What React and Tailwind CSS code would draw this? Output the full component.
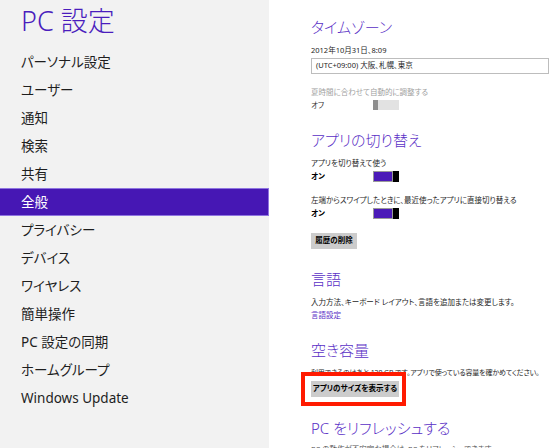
import React from "react";

const items = [
  "パーソナル設定",
  "ユーザー",
  "通知",
  "検索",
  "共有",
  "全般",
  "プライバシー",
  "デバイス",
  "ワイヤレス",
  "簡単操作",
  "PC 設定の同期",
  "ホームグループ",
  "Windows Update",
];

const font = "font-['Noto_Sans','Noto_Sans_CJK_JP',sans-serif] [font-feature-settings:'palt']";

function Heading({ children, mt }) {
  return (
    <div className={`${mt} h-[20px] shrink-0 text-[15px] font-light leading-[20px] text-[#5a2fc6] whitespace-nowrap`}>
      {children}
    </div>
  );
}

function Small({ children, mt, className = "" }) {
  return (
    <div className={`${mt} h-[12px] shrink-0 text-[7.5px] leading-[12px] whitespace-nowrap ${className}`}>
      {children}
    </div>
  );
}

function ToggleOn() {
  return (
    <div className="flex h-[11px] w-[26px]">
      <div className="flex-1 border border-[#9a9a9a] bg-[#4b1ab8]" />
      <div className="w-[6px] bg-black" />
    </div>
  );
}

function ToggleOff() {
  return (
    <div className="flex h-[10px] w-[26px] bg-[#e2e2e2]">
      <div className="w-[5px] bg-[#8e8e8e]" />
    </div>
  );
}

export default function App() {
  return (
    <div className={`flex h-[448px] w-[550px] overflow-hidden bg-white ${font}`}>
      <div className="w-[269px] shrink-0 bg-[#f2f2f2]">
        <div className="mt-[5px] h-[32px] pl-[21px] text-[27px] font-light leading-[32px] text-[#4a1dbd]">
          PC 設定
        </div>
        <div className="mt-[11px] flex flex-col">
          {items.map((it) =>
            it === "全般" ? (
              <div
                key={it}
                className="h-[28px] border-y border-r border-[#8f74e0] bg-[#4617b4] pl-[21px] text-[13.5px] leading-[26px] text-white"
              >
                {it}
              </div>
            ) : (
              <div key={it} className="h-[28px] pl-[21px] text-[13.5px] leading-[28px] text-[#1e1e1e]">
                {it}
              </div>
            )
          )}
        </div>
      </div>

      <div className="flex min-w-0 flex-1 flex-col pl-[42px] text-[#1e1e1e]">
        <Heading mt="mt-[17px]">タイムゾーン</Heading>
        <Small mt="mt-[7px]">2012年10月31日、8:09</Small>
        <div className="mt-[2px] flex h-[16px] w-[238px] shrink-0 items-center border border-[#bdbdbd] pl-[4px] text-[7.5px] whitespace-nowrap">
          (UTC+09:00) 大阪、札幌、東京
        </div>
        <Small mt="mt-[12px]" className="text-[#a0a0a0]">夏時間に合わせて自動的に調整する</Small>
        <div className="mt-[1px] flex h-[12px] shrink-0 items-center">
          <div className="w-[62px] text-[7.5px] leading-[12px] text-[#333]">オフ</div>
          <ToggleOff />
        </div>

        <Heading mt="mt-[19px]">アプリの切り替え</Heading>
        <Small mt="mt-[7px]">アプリを切り替えて使う</Small>
        <div className="mt-[1px] flex h-[12px] shrink-0 items-center">
          <div className="w-[62px] text-[7.5px] font-bold leading-[12px] text-black">オン</div>
          <ToggleOn />
        </div>
        <Small mt="mt-[12px]">左端からスワイプしたときに、最近使ったアプリに直接切り替える</Small>
        <div className="mt-[1px] flex h-[12px] shrink-0 items-center">
          <div className="w-[62px] text-[7.5px] font-bold leading-[12px] text-black">オン</div>
          <ToggleOn />
        </div>
        <div className="mt-[14px] flex h-[16px] w-[46px] shrink-0 items-center justify-center bg-[#cccccc] text-[7.5px] font-bold text-black whitespace-nowrap">
          履歴の削除
        </div>

        <Heading mt="mt-[20px]">言語</Heading>
        <Small mt="mt-[7px]">入力方法、キーボード レイアウト、言語を追加または変更します。</Small>
        <Small mt="mt-[1px]" className="text-[#5a2fc6]">言語設定</Small>

        <Heading mt="mt-[19px]">空き容量</Heading>
        <div className="mt-[7px] h-[12px] shrink-0 text-[7px] leading-[12px] whitespace-nowrap tracking-[-0.15px]">
          利用できるのはあと 120 GB です。アプリで使っている容量を確かめてください。
        </div>
        <div className="relative mt-[2px] h-[16px] w-[88px] shrink-0">
          <div className="flex h-[16px] w-[88px] items-center justify-center bg-[#cccccc] text-[7.5px] font-bold text-black whitespace-nowrap">
            アプリのサイズを表示する
          </div>
          <div className="absolute -left-[10px] -top-[9px] h-[34px] w-[105px] border-[4px] border-[#ff1a00]" />
        </div>

        <Heading mt="mt-[21px]">PC をリフレッシュする</Heading>
        <Small mt="mt-[5px]" className="text-[#555]">PC の動作が不安定な場合は、PC をリフレッシュできます。</Small>
      </div>
    </div>
  );
}
